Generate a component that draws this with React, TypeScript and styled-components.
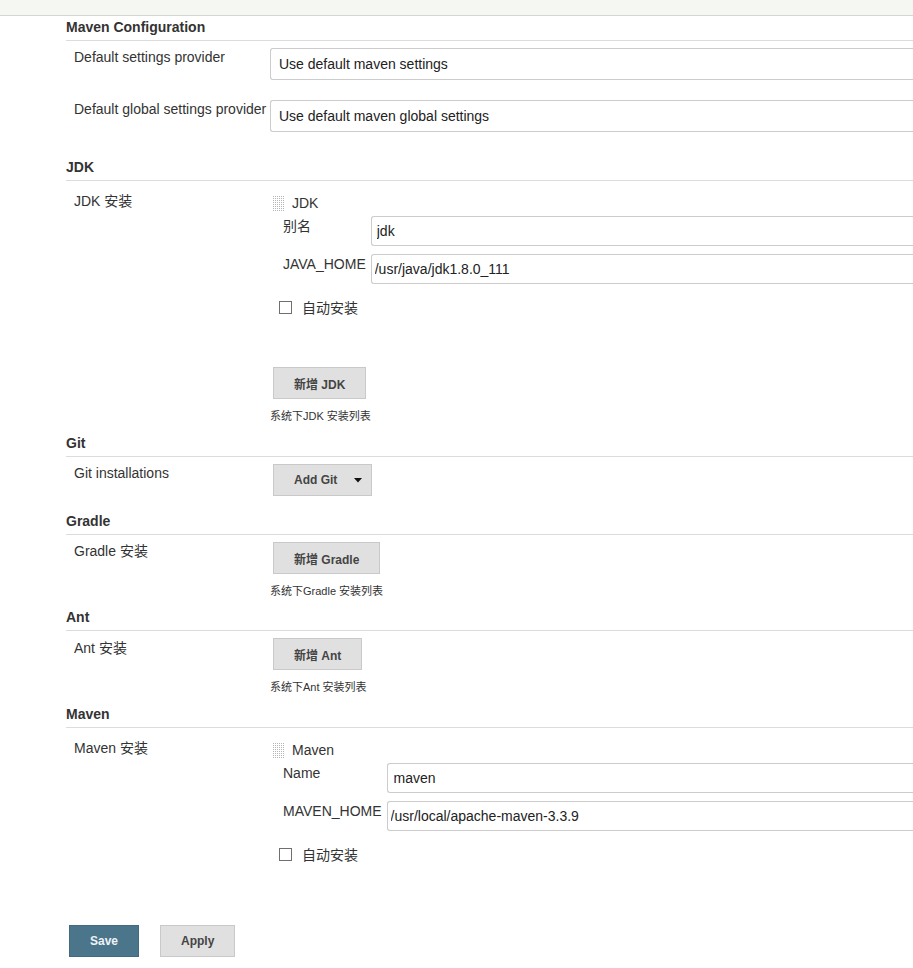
import React from "react";
import styled, { createGlobalStyle } from "styled-components";

const FONT = `"Liberation Sans", Arial, "Noto Sans CJK SC", sans-serif`;

const GlobalStyle = createGlobalStyle`
  html, body { margin: 0; padding: 0; background: #fff; overflow: hidden; }
  body { font-family: ${FONT}; font-size: 14px; color: #333; }
`;

const TopBar = styled.div`
  height: 15px;
  background: #f5f7f2;
  border-bottom: 1px solid #d3d7cf;
`;

const Page = styled.main`
  width: 100%;
  padding-left: 66px;
  box-sizing: border-box;
`;

const SectionHeader = styled.div<{ $top: number }>`
  margin-top: ${(p) => p.$top}px;
  font-weight: bold;
  font-size: 14px;
  line-height: 18px;
  padding-bottom: 4px;
  border-bottom: 1px solid #dcdcdc;
  color: #333;
`;

const FormGrid = styled.div<{ $gap?: number }>`
  display: grid;
  grid-template-columns: 204px 1fr;
  row-gap: ${(p) => p.$gap ?? 20}px;
  margin-top: 7px;
`;

const Label = styled.div<{ $pt?: number }>`
  padding-left: 8px;
  padding-top: ${(p) => p.$pt ?? 0}px;
  line-height: 18px;
  white-space: nowrap;
`;

const Cell = styled.div`
  display: flex;
  flex-direction: column;
  align-items: flex-start;
  min-width: 0;
`;

/* Inputs run past the right edge of the window in the reference, so their
   right border is never visible. */
const TextInput = styled.input<{ $h: number; $pad: number }>`
  display: block;
  width: 100%;
  height: ${(p) => p.$h}px;
  box-sizing: border-box;
  border: 1px solid #cccccc;
  border-right: none;
  border-radius: 3px 0 0 3px;
  padding: 0 ${(p) => p.$pad}px;
  font-family: ${FONT};
  font-size: 14px;
  color: #222;
  background: #fff;
  outline: none;
`;

const RepeatItem = styled.div`
  padding-top: 4px;
  width: 100%;
`;

const ItemHeader = styled.div`
  display: flex;
  align-items: center;
  gap: 8px;
  height: 22px;
  margin-bottom: 2px;
  padding-left: 3px;
  line-height: 18px;
`;

const InnerGrid = styled.div`
  display: grid;
  grid-template-columns: max-content 1fr;
  column-gap: 5px;
  row-gap: 8px;
  padding-left: 13px;
`;

const InnerLabel = styled.div`
  line-height: 20px;
  white-space: nowrap;
`;

const CheckRow = styled.label`
  display: flex;
  align-items: flex-start;
  gap: 10px;
  margin-top: 16px;
  padding-left: 9px;
  line-height: 16px;
`;

const CheckBox = styled.span`
  display: block;
  width: 13px;
  height: 13px;
  margin-top: 1px;
  box-sizing: border-box;
  border: 1px solid #6f6f6f;
  background: #fff;
`;

const Button = styled.button<{ $primary?: boolean; $mt?: number }>`
  display: inline-flex;
  align-items: center;
  gap: 17px;
  height: 32px;
  margin: ${(p) => p.$mt ?? 0}px 0 0 0;
  padding: 0 20px;
  box-sizing: border-box;
  border: 1px solid ${(p) => (p.$primary ? "#426b80" : "#c9c9c9")};
  border-radius: 0;
  background: ${(p) => (p.$primary ? "#4b758b" : "#e0e0e0")};
  color: ${(p) => (p.$primary ? "#eef3f6" : "#444")};
  font-family: ${FONT};
  font-weight: bold;
  font-size: 12px;
  white-space: nowrap;
  cursor: pointer;
`;

const DropButton = styled(Button)`
  padding-right: 9px;
`;

const ButtonWrap = styled.div`
  padding-left: 3px;
`;

const Helper = styled.div`
  margin-top: 11px;
  font-size: 11px;
  line-height: 13px;
  color: #333;
  white-space: nowrap;
`;

const BottomBar = styled.div`
  display: flex;
  gap: 21px;
  margin-top: 62px;
  padding-left: 3px;
`;

const Handle = () => {
  const dots: React.ReactNode[] = [];
  for (let x = 0; x < 6; x++)
    for (let y = 0; y < 8; y++)
      dots.push(<rect key={`${x}-${y}`} x={x * 2} y={y * 2} width="1" height="1" fill="#b5b5b5" />);
  return (
    <svg width="11" height="15" viewBox="0 0 11 15">
      {dots}
    </svg>
  );
};

const Caret = () => (
  <svg width="8" height="5" viewBox="0 0 8 5">
    <path d="M0 0h8L4 4.5z" fill="#111" />
  </svg>
);

export default function App() {
  return (
    <>
      <GlobalStyle />
      <TopBar />
      <Page>
        <SectionHeader $top={2}>Maven Configuration</SectionHeader>
        <FormGrid>
          <Label>Default settings provider</Label>
          <Cell>
            <TextInput $h={32} $pad={8} readOnly value="Use default maven settings" />
          </Cell>
          <Label>Default global settings provider</Label>
          <Cell>
            <TextInput $h={32} $pad={8} readOnly value="Use default maven global settings" />
          </Cell>
        </FormGrid>

        <SectionHeader $top={26}>JDK</SectionHeader>
        <FormGrid>
          <Label $pt={4}>JDK 安装</Label>
          <Cell>
            <RepeatItem>
              <ItemHeader>
                <Handle />
                <span>JDK</span>
              </ItemHeader>
              <InnerGrid>
                <InnerLabel>别名</InnerLabel>
                <TextInput $h={30} $pad={5} readOnly value="jdk" />
                <InnerLabel>JAVA_HOME</InnerLabel>
                <TextInput $h={30} $pad={3} readOnly value="/usr/java/jdk1.8.0_111" />
              </InnerGrid>
              <CheckRow>
                <CheckBox />
                <span>自动安装</span>
              </CheckRow>
            </RepeatItem>
            <ButtonWrap>
              <Button $mt={51}>新增 JDK</Button>
            </ButtonWrap>
            <Helper>系统下JDK 安装列表</Helper>
          </Cell>
        </FormGrid>

        <SectionHeader $top={11}>Git</SectionHeader>
        <FormGrid>
          <Label>Git installations</Label>
          <Cell>
            <ButtonWrap>
              <DropButton>
                <span>Add Git</span>
                <Caret />
              </DropButton>
            </ButtonWrap>
          </Cell>
        </FormGrid>

        <SectionHeader $top={16}>Gradle</SectionHeader>
        <FormGrid>
          <Label>Gradle 安装</Label>
          <Cell>
            <ButtonWrap>
              <Button>新增 Gradle</Button>
            </ButtonWrap>
            <Helper>系统下Gradle 安装列表</Helper>
          </Cell>
        </FormGrid>

        <SectionHeader $top={10}>Ant</SectionHeader>
        <FormGrid>
          <Label $pt={1}>Ant 安装</Label>
          <Cell>
            <ButtonWrap>
              <Button>新增 Ant</Button>
            </ButtonWrap>
            <Helper>系统下Ant 安装列表</Helper>
          </Cell>
        </FormGrid>

        <SectionHeader $top={11}>Maven</SectionHeader>
        <FormGrid>
          <Label $pt={4}>Maven 安装</Label>
          <Cell>
            <RepeatItem>
              <ItemHeader>
                <Handle />
                <span>Maven</span>
              </ItemHeader>
              <InnerGrid>
                <InnerLabel>Name</InnerLabel>
                <TextInput $h={30} $pad={6} readOnly value="maven" />
                <InnerLabel>MAVEN_HOME</InnerLabel>
                <TextInput $h={30} $pad={3} readOnly value="/usr/local/apache-maven-3.3.9" />
              </InnerGrid>
              <CheckRow>
                <CheckBox />
                <span>自动安装</span>
              </CheckRow>
            </RepeatItem>
          </Cell>
        </FormGrid>

        <BottomBar>
          <Button $primary>Save</Button>
          <Button>Apply</Button>
        </BottomBar>
      </Page>
    </>
  );
}
